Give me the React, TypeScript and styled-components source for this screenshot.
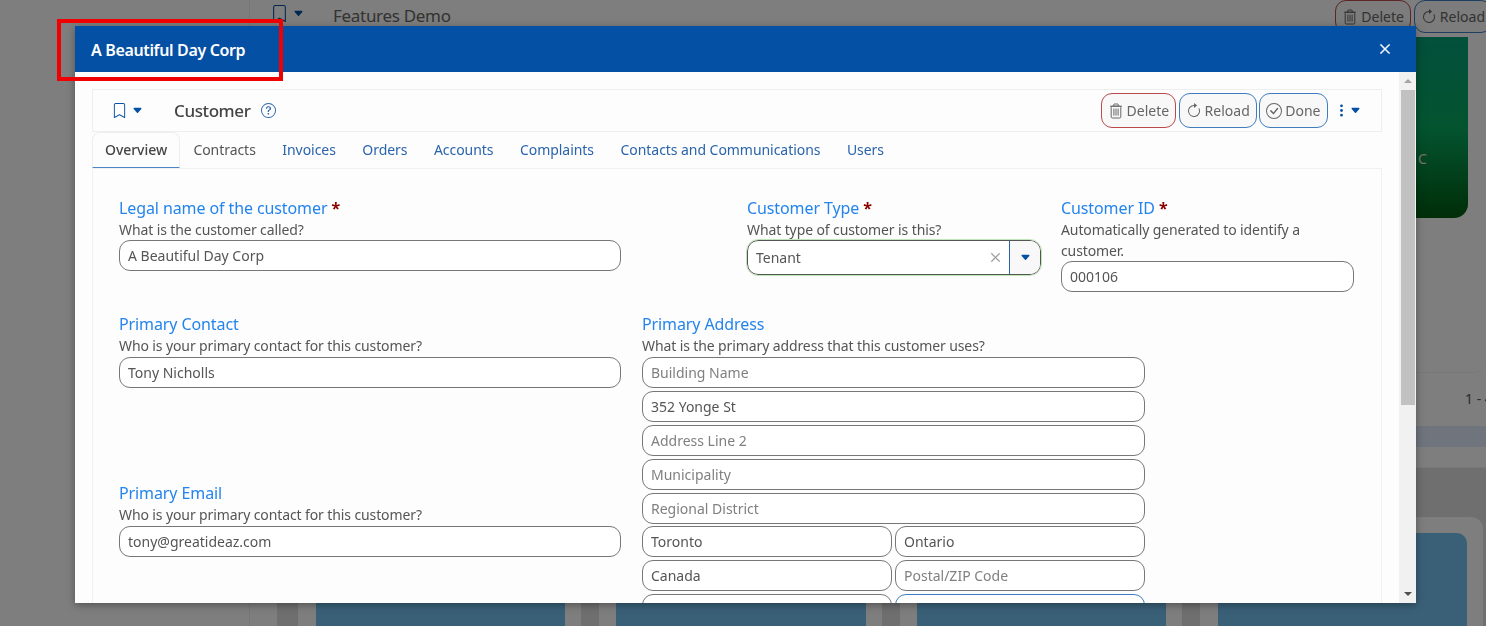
import React from 'react'
import styled, { createGlobalStyle } from 'styled-components'
import {
  BsArrowClockwise,
  BsBookmark,
  BsCaretDownFill,
  BsCheckCircle,
  BsQuestionCircle,
  BsThreeDotsVertical,
  BsXLg,
} from 'react-icons/bs'

const FONT = '"Noto Sans", "Open Sans", sans-serif'

const GlobalStyle = createGlobalStyle`
  html, body {
    margin: 0;
    height: 626px;
    overflow: hidden;
    background: #fcfcfc;
    font-family: ${FONT};
  }
  * { box-sizing: border-box; }
`

const TrashIcon = ({ size = 16 }: { size?: number }) => (
  <svg width={size} height={size} viewBox="0 0 16 16" fill="none" stroke="currentColor" strokeWidth="1">
    <path d="M2 3.2h12M5.8 3V1.5c0-.3.2-.5.5-.5h3.4c.3 0 .5.2.5.5V3" />
    <rect x="3.2" y="3.2" width="9.6" height="11.8" rx="1.2" />
    <path d="M5.9 5.6v7M8 5.6v7M10.1 5.6v7" />
  </svg>
)

const App = () => {
  return (
    <>
      <GlobalStyle />
      <Page>
        <Sidebar />
        <Main>
          <MainBar>
            <BookmarkButton $size={17}>
              <BsBookmark />
              <SmallCaret />
            </BookmarkButton>
            <MainTitle>Features Demo</MainTitle>
            <MainActions>
              <ActionButton $tone="danger" $tall>
                <TrashIcon /> Delete
              </ActionButton>
              <ActionButton $tone="primary" $tall>
                <BsArrowClockwise /> Reload
              </ActionButton>
            </MainActions>
          </MainBar>
          <ListPanel>
            <GreenCard>C</GreenCard>
          </ListPanel>
          <Pager>1 - 4</Pager>
          <PagerBar />
          <PagerFoot />
          <CardSection>
            <SectionCard>
              <BlueCard />
            </SectionCard>
            <SectionCard>
              <BlueCard />
            </SectionCard>
            <SectionCard>
              <BlueCard />
            </SectionCard>
            <SectionCard>
              <BlueCard />
            </SectionCard>
          </CardSection>
        </Main>
      </Page>

      <Backdrop />

      <Modal>
        <ModalHeader>
          <ModalTitle>A Beautiful Day Corp</ModalTitle>
          <CloseButton>
            <BsXLg />
          </CloseButton>
        </ModalHeader>
        <ModalBody>
          <Content>
            <Toolbar>
              <BookmarkButton $size={15}>
                <BsBookmark />
                <SmallCaret />
              </BookmarkButton>
              <ToolbarTitle>Customer</ToolbarTitle>
              <HelpIcon>
                <BsQuestionCircle />
              </HelpIcon>
              <ToolbarActions>
                <ActionButton $tone="danger">
                  <TrashIcon /> Delete
                </ActionButton>
                <ActionButton $tone="primary">
                  <BsArrowClockwise /> Reload
                </ActionButton>
                <ActionButton $tone="primary">
                  <BsCheckCircle /> Done
                </ActionButton>
                <MoreMenu>
                  <BsThreeDotsVertical />
                  <SmallCaret />
                </MoreMenu>
              </ToolbarActions>
            </Toolbar>

            <Tabs>
              <Tab $active>Overview</Tab>
              <Tab $plain>Contracts</Tab>
              <Tab>Invoices</Tab>
              <Tab>Orders</Tab>
              <Tab>Accounts</Tab>
              <Tab>Complaints</Tab>
              <Tab>Contacts and Communications</Tab>
              <Tab>Users</Tab>
            </Tabs>

            <Panel>
              <TopRow>
                <NameField>
                  <Label>
                    Legal name of the customer <Required>*</Required>
                  </Label>
                  <Hint>What is the customer called?</Hint>
                  <TextInput defaultValue="A Beautiful Day Corp" readOnly />
                </NameField>
                <TypeField>
                  <Label>
                    Customer Type <Required>*</Required>
                  </Label>
                  <Hint>What type of customer is this?</Hint>
                  <SelectBox>
                    <SelectValue>Tenant</SelectValue>
                    <SelectClear>
                      <BsXLg />
                    </SelectClear>
                    <SelectCaret>
                      <SmallCaret />
                    </SelectCaret>
                  </SelectBox>
                </TypeField>
                <IdField>
                  <Label>
                    Customer ID <Required>*</Required>
                  </Label>
                  <Hint>Automatically generated to identify a customer.</Hint>
                  <TextInput defaultValue="000106" readOnly />
                </IdField>
              </TopRow>

              <LowerRow>
                <ContactColumn>
                  <Field>
                    <Label>Primary Contact</Label>
                    <Hint>Who is your primary contact for this customer?</Hint>
                    <TextInput defaultValue="Tony Nicholls" readOnly />
                  </Field>
                  <Field>
                    <Label>Primary Email</Label>
                    <Hint>Who is your primary contact for this customer?</Hint>
                    <TextInput defaultValue="tony@greatideaz.com" readOnly />
                  </Field>
                </ContactColumn>
                <AddressColumn>
                  <Label>Primary Address</Label>
                  <Hint>What is the primary address that this customer uses?</Hint>
                  <AddressGrid>
                    <WideInput placeholder="Building Name" readOnly />
                    <WideInput defaultValue="352 Yonge St" readOnly />
                    <WideInput placeholder="Address Line 2" readOnly />
                    <WideInput placeholder="Municipality" readOnly />
                    <WideInput placeholder="Regional District" readOnly />
                    <TextInput defaultValue="Toronto" readOnly />
                    <TextInput defaultValue="Ontario" readOnly />
                    <TextInput defaultValue="Canada" readOnly />
                    <TextInput placeholder="Postal/ZIP Code" readOnly />
                    <TextInput readOnly />
                    <TextInput $focused readOnly />
                  </AddressGrid>
                </AddressColumn>
              </LowerRow>
            </Panel>
          </Content>

          <Scrollbar>
            <ScrollArrow $up />
            <ScrollThumb />
            <ScrollArrow />
          </Scrollbar>
        </ModalBody>
      </Modal>

      <Highlight />
    </>
  )
}

export default App

/* page behind the dialog */

const Page = styled.div`
  display: flex;
  width: 1486px;
  height: 626px;
  overflow: hidden;
  background: #fcfcfc;
`

const Sidebar = styled.div`
  width: 250px;
  flex: none;
  border-right: 1px solid #ececec;
`

const Main = styled.div`
  flex: 1;
  min-width: 0;
  display: flex;
  flex-direction: column;
`

const MainBar = styled.div`
  height: 37px;
  flex: none;
  display: flex;
  align-items: flex-start;
  padding: 5px 0 0 21px;
  color: #666;
`

const MainTitle = styled.div`
  margin-left: 29px;
  font-size: 17px;
  letter-spacing: -0.3px;
  line-height: 22px;
  color: #666;
`

const MainActions = styled.div`
  margin-left: auto;
  margin-top: -5px;
  margin-right: -6px;
  display: flex;
  gap: 3px;
`

const ListPanel = styled.div`
  height: 336px;
  flex: none;
  padding-right: 15px;
  display: flex;
  justify-content: flex-end;
  align-items: flex-start;
  border-radius: 0 0 10px 0;
  border-bottom: 1px solid #f0f0f0;
  margin-right: 3px;
`

const GreenCard = styled.div`
  width: 300px;
  height: 181px;
  padding: 112px 0 0 250px;
  border-radius: 0 0 14px 14px;
  background: linear-gradient(180deg, #06a078 0%, #08a860 50%, #005c10 100%);
  font-size: 14px;
  color: #e8e8d0;
`

const Pager = styled.div`
  height: 53px;
  flex: none;
  padding: 16px 0 0 1215px;
  font-size: 14px;
  white-space: nowrap;
  color: #555;
`

const PagerBar = styled.div`
  height: 21px;
  flex: none;
  background: #dfe8fa;
`

const PagerFoot = styled.div`
  height: 21px;
  flex: none;
  border-bottom: 1px solid #f0f0f0;
`

const CardSection = styled.div`
  flex: 1;
  display: flex;
  gap: 18px;
  margin-left: 27px;
  padding: 49px 3px 0 21px;
  background: #dedede;
`

const SectionCard = styled.div`
  flex: 1;
  padding: 16px 16px 0 17.5px;
  background: #fcfcfc;
  border-radius: 12px 12px 0 0;
  display: flex;
`

const BlueCard = styled.div`
  flex: 1;
  background: #74c0f0;
  border-radius: 10px 10px 0 0;
`

const Backdrop = styled.div`
  position: fixed;
  inset: 0;
  background: rgba(0, 0, 0, 0.5);
`

/* dialog */

const Modal = styled.div`
  position: absolute;
  left: 75px;
  top: 26px;
  width: 1341px;
  height: 577px;
  display: flex;
  flex-direction: column;
  background: #fdfdfd;
  overflow: hidden;
  box-shadow: 0 2px 8px rgba(0, 0, 0, 0.35);
`

const ModalHeader = styled.div`
  height: 46px;
  flex: none;
  display: flex;
  align-items: center;
  justify-content: space-between;
  padding: 2px 25px 0 16px;
  background: #0450a4;
  color: #fff;
`

const ModalTitle = styled.div`
  font-size: 16px;
  font-weight: 600;
  letter-spacing: -0.35px;
`

const CloseButton = styled.div`
  display: flex;
  font-size: 12px;
  margin-top: -2px;
  color: #fff;
  svg {
    stroke: #fff;
    stroke-width: 1.2px;
  }
`

const ModalBody = styled.div`
  flex: 1;
  min-height: 0;
  display: flex;
`

const Content = styled.div`
  flex: 1;
  min-width: 0;
  overflow: hidden;
  padding: 17px 17px 0 17px;
`

const Toolbar = styled.div`
  height: 43px;
  display: flex;
  align-items: center;
  padding: 0 19px;
  border: 1px solid #eeeeee;
`

const BookmarkButton = styled.div<{ $size: number }>`
  display: flex;
  align-items: center;
  gap: 5px;
  color: #0450a4;
  font-size: ${(p) => p.$size}px;
`

const SmallCaret = styled(BsCaretDownFill)`
  font-size: 11px;
  color: #0450a4;
`

const ToolbarTitle = styled.div`
  margin-left: 31px;
  font-size: 17px;
  font-weight: 500;
  letter-spacing: -0.4px;
  color: #444;
`

const HelpIcon = styled.div`
  display: flex;
  margin-left: 11px;
  font-size: 15px;
  color: #2a64ad;
`

const ToolbarActions = styled.div`
  margin-left: auto;
  margin-right: 1px;
  display: flex;
  align-items: center;
  gap: 2.5px;
`

const ActionButton = styled.div<{ $tone: 'danger' | 'primary'; $tall?: boolean }>`
  height: ${(p) => (p.$tall ? 33 : 35)}px;
  display: flex;
  align-items: center;
  gap: 3px;
  padding: 0 6px;
  border: 1px solid ${(p) => (p.$tone === 'danger' ? '#b84a4c' : '#3f7cc0')};
  border-radius: 11px;
  background: #f8f8f8;
  color: #666;
  font-size: 14px;
  white-space: nowrap;
  svg {
    width: 16px;
    height: 16px;
    flex: none;
  }
`

const MoreMenu = styled.div`
  margin-left: 4px;
  display: flex;
  align-items: center;
  gap: 1px;
  font-size: 15px;
  color: #0450a4;
`

const Tabs = styled.div`
  height: 36px;
  display: flex;
  align-items: stretch;
`

const Tab = styled.div<{ $active?: boolean; $plain?: boolean }>`
  display: flex;
  align-items: center;
  padding: 0 ${(p) => (p.$active ? 12 : 12.25)}px 1px;
  font-size: 14px;
  letter-spacing: -0.05px;
  white-space: nowrap;
  color: ${(p) => (p.$active ? '#444' : p.$plain ? '#555' : '#2a64ad')};
  font-weight: ${(p) => (p.$active ? 500 : 400)};
  border: 1px solid ${(p) => (p.$active ? '#eeeeee' : 'transparent')};
  border-bottom: 1px solid ${(p) => (p.$active ? '#4a86c8' : 'transparent')};
  border-radius: 8px 8px 0 0;
`

const Panel = styled.div`
  padding: 28px 26px 0 26px;
  border: 1px solid #f1f1f1;
  border-bottom: none;
`

const TopRow = styled.div`
  display: flex;
  align-items: flex-start;
  min-height: 116px;
`

const Field = styled.div`
  display: flex;
  flex-direction: column;
`

const NameField = styled(Field)`
  width: 502px;
`

const TypeField = styled(Field)`
  width: 294px;
  margin-left: 126px;
`

const IdField = styled(Field)`
  width: 293px;
  margin-left: 20px;
`

const Label = styled.div`
  font-size: 16px;
  line-height: 22px;
  letter-spacing: -0.1px;
  color: #2484ee;
`

const Required = styled.span`
  color: #8b0000;
  font-weight: 700;
`

const Hint = styled.div`
  font-size: 14px;
  line-height: 21px;
  letter-spacing: -0.11px;
  color: #555;
`

const LowerRow = styled.div`
  display: flex;
  align-items: flex-start;
  gap: 21px;
  ${Hint} {
    margin-bottom: 1px;
  }
`

const ContactColumn = styled.div`
  width: 502px;
  flex: none;
  display: flex;
  flex-direction: column;
  gap: 94px;
`

const AddressColumn = styled(Field)`
  width: 503px;
  flex: none;
`

const TextInput = styled.input<{ $focused?: boolean }>`
  width: 100%;
  height: 31px;
  padding: 0 8px;
  font-family: ${FONT};
  font-size: 14px;
  color: #555;
  background: #fff;
  border: 1px solid ${(p) => (p.$focused ? '#3f7cc0' : '#777')};
  border-radius: 11px;
  outline: none;
  &::placeholder {
    color: #808080;
  }
`

const AddressGrid = styled.div`
  display: grid;
  grid-template-columns: 1fr 1fr;
  gap: 2.9px 3px;
`

const WideInput = styled(TextInput)`
  grid-column: 1 / -1;
`

const SelectBox = styled.div`
  height: 35px;
  display: flex;
  align-items: stretch;
  border: 1px solid #555;
  border-radius: 11px;
  background: #fff;
  overflow: hidden;
  outline: 1px solid #bfe6b6;
`

const SelectValue = styled.div`
  flex: 1;
  display: flex;
  align-items: center;
  padding-left: 8px;
  font-size: 14px;
  color: #555;
`

const SelectClear = styled.div`
  display: flex;
  align-items: center;
  padding-right: 8px;
  font-size: 11px;
  color: #999;
  svg {
    stroke: #999;
    stroke-width: 1px;
  }
`

const SelectCaret = styled.div`
  width: 31px;
  display: flex;
  align-items: center;
  justify-content: center;
  border-left: 1px solid #2a64ad;
  background: #f8f8f8;
`

const Scrollbar = styled.div`
  width: 17px;
  flex: none;
  display: flex;
  flex-direction: column;
  align-items: center;
  background: #f1f1f1;
`

const ScrollArrow = styled.div<{ $up?: boolean }>`
  width: 0;
  height: 0;
  flex: none;
  border-left: 4px solid transparent;
  border-right: 4px solid transparent;
  ${(p) =>
    p.$up
      ? 'border-bottom: 4px solid #a3a3a3; margin: 7px 0 7px;'
      : 'border-top: 4px solid #505050; margin-top: auto; margin-bottom: 7px;'}
`

const ScrollThumb = styled.div`
  width: 14px;
  height: 315px;
  flex: none;
  background: #c1c1c1;
`

/* red annotation drawn on top of the screenshot */

const Highlight = styled.div`
  position: absolute;
  left: 57px;
  top: 19px;
  width: 226px;
  height: 62px;
  border: 4px solid #f00000;
  pointer-events: none;
`
